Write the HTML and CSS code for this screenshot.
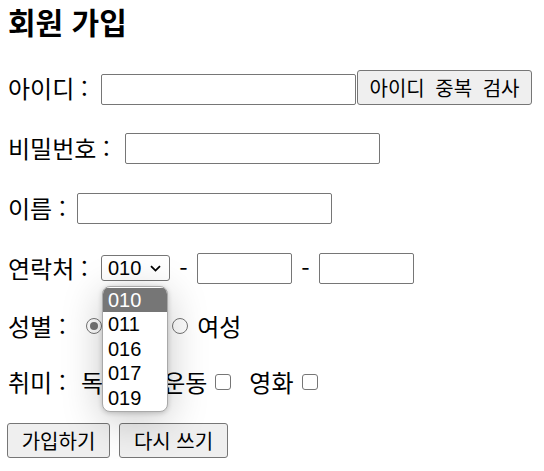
FILE: index.html
```html
<!DOCTYPE html>
<html lang="ko">
<head>
<meta charset="utf-8">
<title>회원 가입</title>
<link rel="stylesheet" href="styles.css">
</head>
<body>
<div class="page">
  <h3 class="title">회원 가입</h3>
  <form class="form">
    <div class="row r1">
      <span class="label l-id">아이디 :</span>
      <span class="input w-id"></span>
      <span class="btn b-check">아이디 중복 검사</span>
    </div>
    <div class="row">
      <span class="label l-pw">비밀번호 :</span>
      <span class="input w-id"></span>
    </div>
    <div class="row">
      <span class="label l-name">이름 :</span>
      <span class="input w-id"></span>
    </div>
    <div class="row">
      <span class="label l-tel">연락처 :</span>
      <span class="select">010<svg class="chev" width="11" height="7" viewBox="0 0 11 7"><path d="M1 1.2 L5.5 5.6 L10 1.2" fill="none" stroke="#000" stroke-width="1.8"/></svg></span>
      <span class="dash">-</span>
      <span class="input w-tel"></span>
      <span class="dash">-</span>
      <span class="input w-tel"></span>
    </div>
    <div class="row short">
      <span class="label l-sex">성별 :</span>
      <span class="radio checked"></span>
      <span class="opt o-male">남성</span>
      <span class="radio r-f"></span>
      <span class="opt">여성</span>
    </div>
    <div class="row short">
      <span class="label l-hobby">취미 :</span>
      <span class="opt">독서</span>
      <span class="check"></span>
      <span class="opt o-sport">운동</span>
      <span class="check"></span>
      <span class="opt o-movie">영화</span>
      <span class="check"></span>
    </div>
    <div class="row buttons">
      <span class="btn b-join">가입하기</span>
      <span class="btn b-reset">다시 쓰기</span>
    </div>
  </form>
  <ul class="dropdown">
    <li class="item selected">010</li>
    <li class="item">011</li>
    <li class="item">016</li>
    <li class="item">017</li>
    <li class="item">019</li>
  </ul>
</div>
</body>
</html>
```

FILE: styles.css
```css
* { box-sizing: border-box; }
html, body { margin: 0; padding: 0; background: #fff; }
body {
  font-family: "Liberation Sans", "Noto Sans CJK KR", sans-serif;
  color: #000;
  width: 544px;
  height: 471px;
  overflow: hidden;
}
.page {
  position: relative;
  padding: 5px 8px 0 8px;
}
.title {
  margin: 0;
  font-size: 30px;
  line-height: 33px;
  height: 33px;
  font-weight: bold;
  font-family: "Noto Sans CJK KR", "Liberation Sans", sans-serif;
}
.form {
  display: flex;
  flex-direction: column;
  gap: 24px;
  margin-top: 32px;
}
.row {
  display: flex;
  align-items: center;
  height: 36px;
}
.row.short { height: 32px; }
.label, .opt, .dash {
  font-family: "Noto Sans CJK KR", "Liberation Sans", sans-serif;
  font-size: 24px;
  line-height: 30px;
  white-space: nowrap;
}
.l-id { width: 93px; }
.l-pw { width: 117px; }
.l-name { width: 69px; }
.l-tel { width: 93px; }
.l-sex { width: 78px; }
.l-hobby { width: 73px; }
.input {
  display: block;
  height: 31px;
  border: 1px solid #767676;
  border-radius: 2px;
  background: #fff;
}
.w-id { width: 255px; }
.w-tel { width: 95px; }
.r1 .input { align-self: flex-end; margin-bottom: 1px; }
.r1 .btn { align-self: flex-start; }
.btn {
  display: flex;
  align-items: center;
  justify-content: center;
  height: 35px;
  border: 1px solid #767676;
  border-radius: 3px;
  background: #efefef;
  font-family: "Noto Sans CJK KR", "Liberation Sans", sans-serif;
  font-size: 20px;
  white-space: nowrap;
  word-spacing: 5px;
}
.b-check { width: 175px; margin-left: 1px; }
.b-join { width: 103px; word-spacing: 0; }
.b-reset { width: 109px; margin-left: 9px; word-spacing: 0; }
.buttons { margin-left: -1px; }
.select {
  display: flex;
  align-items: center;
  width: 69px;
  height: 26px;
  border: 1px solid #767676;
  border-radius: 3px;
  padding-left: 6px;
  font-size: 20px;
  line-height: 24px;
  font-family: "Liberation Sans", sans-serif;
}
.chev { margin-left: 9px; }
.dash { width: 27px; text-align: center; }
.radio {
  display: block;
  flex: none;
  width: 16px;
  height: 16px;
  border: 1px solid #767676;
  border-radius: 50%;
  background: #fff;
  position: relative;
}
.radio.checked::after {
  content: "";
  position: absolute;
  left: 3px;
  top: 3px;
  width: 8px;
  height: 8px;
  border-radius: 50%;
  background: #767676;
}
.o-male { margin-left: 4px; margin-right: 22px; }
.r-f { margin-right: 9px; }
.check {
  display: block;
  flex: none;
  width: 16px;
  height: 16px;
  border: 1px solid #767676;
  border-radius: 3px;
  background: #fff;
  margin-left: 8px;
}
.o-sport { margin-left: 14px; }
.o-movie { margin-left: 18px; }
.dropdown {
  position: absolute;
  left: 102px;
  top: 286px;
  width: 66px;
  margin: 0;
  padding: 1px 0 0 0;
  list-style: none;
  background: #fff;
  border: 1px solid #a9a9a9;
  border-radius: 8px;
  box-shadow: 0 8px 40px rgba(0, 0, 0, 0.22), 0 1px 5px rgba(0, 0, 0, 0.2);
  overflow: hidden;
  height: 126px;
  font-family: "Liberation Sans", sans-serif;
  font-size: 20px;
}
.item {
  height: 24.4px;
  line-height: 24px;
  padding-left: 5px;
}
.item.selected {
  background: #767676;
  color: #fff;
}
```
